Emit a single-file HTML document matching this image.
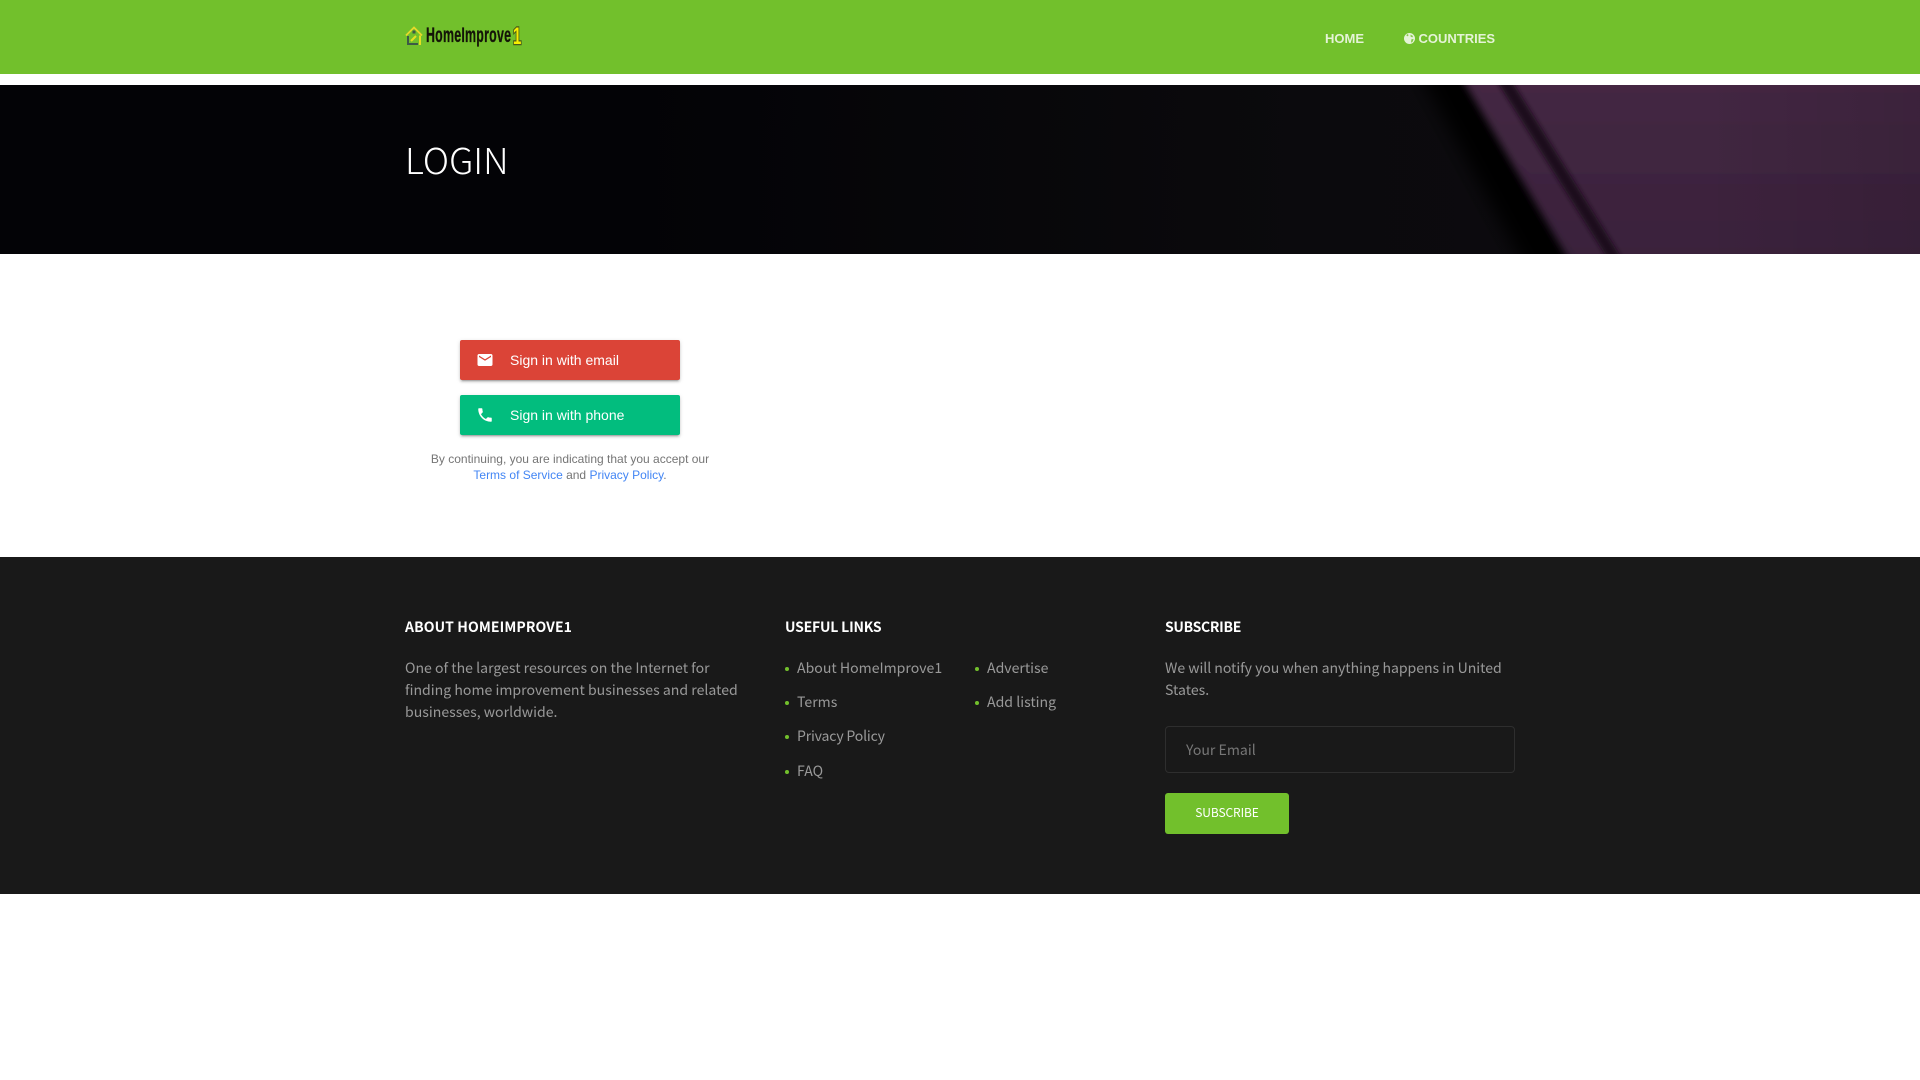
<!DOCTYPE html>
<html lang="en">
<head>
<meta charset="utf-8">
<title>Login - HomeImprove1</title>
<style>
*{box-sizing:border-box}
html,body{margin:0;padding:0;width:1920px;height:1080px;overflow:hidden;background:#fff}
body{position:relative;font-family:"Liberation Sans",sans-serif}
.t{position:absolute;white-space:nowrap;line-height:20px;margin:0;font-weight:400}
.o{font-family:"Noto Sans CJK JP","Liberation Sans",sans-serif;font-size:14.1px;color:#999}
.h{font-family:"Noto Sans CJK JP","Liberation Sans",sans-serif;font-size:14px;color:#fff;font-weight:700;letter-spacing:.1px}
.d{position:absolute;width:4px;height:4px;border-radius:50%;background:#72c02c}
header{position:absolute;left:0;top:0;width:1920px;height:74px;background:#72c02c}
.nav{font:700 13px/20px "Liberation Sans",sans-serif;color:#e5f3d7;position:absolute;top:29px}
.hero{position:absolute;left:0;top:85px;width:1920px;height:169px;background:#040407;overflow:hidden}
.btn{position:absolute;left:460px;width:220px;height:40px;border-radius:2px;box-shadow:0 2px 2px 0 rgba(0,0,0,.14),0 3px 1px -2px rgba(0,0,0,.2),0 1px 5px 0 rgba(0,0,0,.12);color:#fff;font:14px/40px "Liberation Sans",sans-serif}
.btn svg{position:absolute;left:16px;top:11px;width:18px;height:18px;fill:#fff}
.btn span{position:absolute;left:50px;top:0}
.small{position:absolute;left:420px;width:300px;text-align:center;font:12px/16px "Liberation Sans",sans-serif;color:#757575;top:451px}
.small a{color:#4285f4;text-decoration:none}
footer{position:absolute;left:0;top:557px;width:1920px;height:337px;background:#191919}
.input{position:absolute;left:1165px;top:726px;width:350px;height:47px;border:1px solid #2e2e2e;border-radius:4px}
.sub{position:absolute;left:1165px;top:793px;width:124px;height:41px;border-radius:3px;background:#72c02c;color:#fff;text-align:center;font:12px/39px "Noto Sans CJK JP","Liberation Sans",sans-serif;letter-spacing:-.1px}
</style>
</head>
<body>
<header></header>

<svg style="position:absolute;left:405px;top:26px" width="18" height="20" viewBox="0 0 18 20">
  <path d="M1 9.5 9 1.5l8 8" fill="none" stroke="#e7d92a" stroke-width="1.8"/>
  <path d="M3 10v8h10" fill="none" stroke="#3d5a46" stroke-width="2"/>
  <path d="M15 9.5V19" fill="none" stroke="#e7e020" stroke-width="2"/>
  <path d="M6 15 11 10" stroke="#e7e020" stroke-width="2"/>
  <rect x="7.5" y="4.5" width="3" height="3" fill="#3d5a46"/>
</svg>
<div class="t" style="left:425.5px;top:26px;font:700 21px/20px 'Liberation Sans',sans-serif;color:#141408;transform-origin:0 0;transform:scaleX(.59);letter-spacing:.4px;-webkit-text-stroke:.3px #141408">HomeImprove</div>
<div class="t" style="left:513px;top:25px;font:700 24px/24px 'Liberation Sans',sans-serif;color:#f7ef00;transform-origin:0 0;transform:scaleX(.62);-webkit-text-stroke:2.5px #4a5a18;paint-order:stroke fill">1</div>

<a class="nav" style="left:1325px">HOME</a>
<svg style="position:absolute;left:1404px;top:33px" width="11" height="11" viewBox="0 0 11 11">
  <circle cx="5.5" cy="5.5" r="5.5" fill="#e5f3d7"/>
  <path d="M6.5 1.6 9 3 8.4 4.4 6.6 3.6ZM3.4 1 2.2 2.2 3.8 3.4 4.6 2ZM7.4 6.2 9.6 6 8.6 8.8 7 9.6Z" fill="#72c02c" opacity=".85"/>
</svg>
<a class="nav" style="left:1418.5px">COUNTRIES</a>

<div class="hero">
<svg width="1920" height="169" viewBox="0 0 1920 169" style="display:block">
  <defs>
    <linearGradient id="base" x1="0" x2="1" y1="0" y2="0">
      <stop offset="0" stop-color="#030306"/>
      <stop offset=".33" stop-color="#030306"/>
      <stop offset=".68" stop-color="#0b0a0d"/>
      <stop offset="1" stop-color="#0d0b0f"/>
    </linearGradient>
    <linearGradient id="pur" x1="0" x2="0" y1="0" y2="1">
      <stop offset="0" stop-color="#452944"/>
      <stop offset="1" stop-color="#38203a"/>
    </linearGradient>
    <linearGradient id="shade" x1="0" x2="1" y1="0" y2="0">
      <stop offset="0" stop-color="#000" stop-opacity="0"/>
      <stop offset="1" stop-color="#000" stop-opacity=".1"/>
    </linearGradient>
    <filter id="b2" x="-20%" width="140%"><feGaussianBlur stdDeviation="2.5"/></filter>
    <filter id="b4"><feGaussianBlur stdDeviation="4"/></filter>
    <filter id="b8" x="-30%" width="160%"><feGaussianBlur stdDeviation="9"/></filter>
  </defs>
  <rect width="1920" height="169" fill="url(#base)"/>
  <polygon points="1415,-20 1470,-20 1585,190 1530,190" fill="#030203" filter="url(#b8)"/>
  <polygon points="1454,-20 1960,-20 1960,190 1578,190" fill="url(#pur)" filter="url(#b4)"/>
  <polygon points="1490,-15 1505,-15 1632,190 1618,190" fill="#1a0e1a" filter="url(#b2)"/>
  <rect x="1700" width="220" height="169" fill="url(#shade)"/>
</svg>
</div>
<h1 class="t" style="left:405px;top:134px;font:300 36px/50px 'Noto Sans CJK JP','Liberation Sans',sans-serif;color:#fff">LOGIN</h1>

<div class="btn" style="top:340px;background:#db4437">
  <svg viewBox="0 0 24 24"><path d="M20 4H4c-1.1 0-2 .9-2 2v12c0 1.1.9 2 2 2h16c1.1 0 2-.9 2-2V6c0-1.1-.9-2-2-2zm0 4l-8 5-8-5V6l8 5 8-5v2z"/></svg>
  <span>Sign in with email</span>
</div>
<div class="btn" style="top:395px;background:#02bd7e">
  <svg viewBox="0 0 24 24"><path d="M6.62 10.79c1.44 2.83 3.76 5.14 6.59 6.59l2.2-2.2c.27-.27.67-.36 1.02-.24 1.12.37 2.33.57 3.57.57.55 0 1 .45 1 1V20c0 .55-.45 1-1 1-9.39 0-17-7.61-17-17 0-.55.45-1 1-1h3.5c.55 0 1 .45 1 1 0 1.25.2 2.45.57 3.57.11.35.03.74-.25 1.02l-2.2 2.2z"/></svg>
  <span>Sign in with phone</span>
</div>
<div class="small">By continuing, you are indicating that you accept our<br><a>Terms of Service</a> and <a>Privacy Policy</a>.</div>

<footer></footer>

<h4 class="t h" style="left:405px;top:617px">ABOUT HOMEIMPROVE1</h4>
<div class="t o" style="left:405px;top:658px">One of the largest resources on the Internet for</div>
<div class="t o" style="left:405px;top:680px">finding home improvement businesses and related</div>
<div class="t o" style="left:405px;top:702px">businesses, worldwide.</div>

<h4 class="t h" style="left:785px;top:617px;letter-spacing:-.2px">USEFUL LINKS</h4>
<i class="d" style="left:785px;top:667px"></i><div class="t o" style="left:797px;top:658px">About HomeImprove1</div>
<i class="d" style="left:785px;top:701px"></i><div class="t o" style="left:797px;top:692px">Terms</div>
<i class="d" style="left:785px;top:735px"></i><div class="t o" style="left:797px;top:726px;letter-spacing:-.2px">Privacy Policy</div>
<i class="d" style="left:785px;top:770px"></i><div class="t o" style="left:797px;top:761px">FAQ</div>
<i class="d" style="left:975px;top:667px"></i><div class="t o" style="left:987px;top:658px">Advertise</div>
<i class="d" style="left:975px;top:701px"></i><div class="t o" style="left:987px;top:692px">Add listing</div>

<h4 class="t h" style="left:1165px;top:617px;letter-spacing:-.3px">SUBSCRIBE</h4>
<div class="t o" style="left:1165px;top:658px;letter-spacing:-.05px">We will notify you when anything happens in United</div>
<div class="t o" style="left:1165px;top:680px">States.</div>
<div class="input"></div>
<div class="t o" style="left:1186px;top:740px;color:#777">Your Email</div>
<div class="sub">SUBSCRIBE</div>
</body>
</html>
